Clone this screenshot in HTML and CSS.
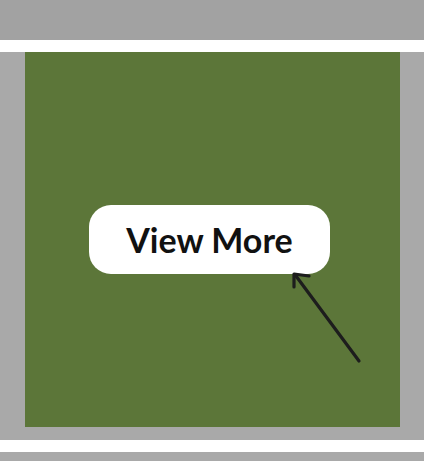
FILE: index.html
```html
<!DOCTYPE html>
<html>
  <head>
    <title>View More</title>
    <meta name="viewport" content="width=device-width, initial-scale=1.0" />
    <link rel="stylesheet" href="styles.css">
  </head>
  <body>
    <div class="band band-top"></div>
    <div class="divider"></div>
    <div class="stage">
      <div class="tile">
        <button class="view-btn" type="button">View More</button>
        <svg class="pointer" width="80" height="100" viewBox="0 0 80 100">
          <path d="M68 91 L5 6" />
          <path d="M3 17 L3 4 L18 6" />
        </svg>
      </div>
    </div>
    <div class="divider"></div>
    <div class="band band-bottom"></div>
  </body>
</html>
```

FILE: styles.css
```css
body {
  margin: 0;
  padding: 0;
  background: #a9a9a9;
  font-family: Lato, "Open Sans", Arial, sans-serif;
  height: 461px;
  overflow: hidden;
}
.band-top {
  height: 40px;
  background: #a2a2a2;
}
.band-bottom {
  height: 20px;
  background: #a9a9a9;
}
.divider {
  height: 12px;
  background: #fff;
}
.stage {
  background: #a9a9a9;
  padding: 0 24px 13px 25px;
}
.tile {
  position: relative;
  height: 375px;
  background: #5c7639;
  display: flex;
  align-items: center;
  justify-content: center;
}
.view-btn {
  width: 241px;
  height: 69px;
  margin-right: 6px;
  border: none;
  border-radius: 22px;
  background: #fff;
  color: #111;
  font-family: Lato, "Open Sans", Arial, sans-serif;
  font-size: 34px;
  font-weight: 700;
  letter-spacing: 0;
  padding: 0;
}
.pointer {
  position: absolute;
  left: 266px;
  top: 218px;
  fill: none;
  stroke: #1d1d1d;
  stroke-width: 3.2;
  stroke-linecap: round;
  stroke-linejoin: round;
}
```
